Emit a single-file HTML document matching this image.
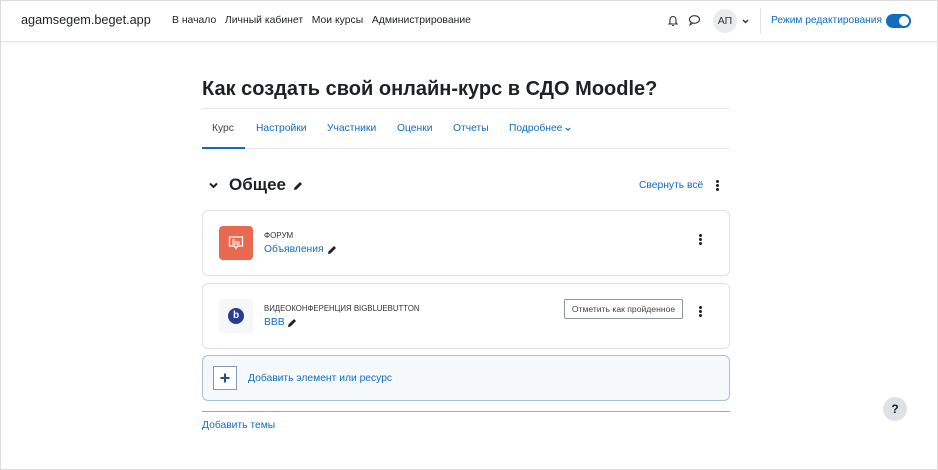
<!DOCTYPE html>
<html><head><meta charset="utf-8"><style>
*{box-sizing:border-box;margin:0;padding:0}
body{width:938px;height:470px;overflow:hidden;background:#fff;font-family:"Liberation Sans","Noto Sans CJK SC",sans-serif;color:#1d2125;position:relative}
.frame{position:absolute;inset:0;border:1px solid #dcdcdc;pointer-events:none}
.abs{position:absolute;white-space:nowrap}
.nav{position:absolute;left:0;top:0;width:938px;height:42px;border-bottom:1px solid #e3e3e3;box-shadow:0 1px 2px rgba(0,0,0,.05)}
.card{position:absolute;left:202px;width:528px;border:1px solid #dee2e6;border-radius:6px;background:#fff}
.kebab{position:absolute;width:3px}
.kebab i{display:block;width:3px;height:3px;background:#1d2125;border-radius:50%;margin-bottom:1px}
</style></head><body>
<div class="nav"></div>
<div class="abs" style="left:21px;top:13px;font-size:12.7px;color:#1d2125">agamsegem.beget.app</div>
<div class="abs" style="left:172px;top:15px;font-size:10.4px;color:#1d2125">В начало&nbsp;&nbsp;&nbsp;Личный кабинет&nbsp;&nbsp;&nbsp;Мои курсы&nbsp;&nbsp;&nbsp;Администрирование</div>
<svg class="abs" style="left:667px;top:14px" width="12" height="13" viewBox="0 0 12 13"><path d="M3 9V5.5a3 3 0 0 1 6 0V9l1 1H2z M5 11.5h2" fill="none" stroke="#333" stroke-width="1.1"/></svg>
<svg class="abs" style="left:688px;top:14px" width="13" height="12" viewBox="0 0 13 12"><ellipse cx="6.5" cy="5.5" rx="5" ry="3.8" fill="none" stroke="#333" stroke-width="1.1"/><path d="M3 8.5 2 11l3-2" fill="none" stroke="#333" stroke-width="1"/></svg>
<div class="abs" style="left:713px;top:9px;width:24px;height:24px;border-radius:50%;background:#e9ecef;font-size:10.5px;line-height:24px;text-align:center;color:#333">АП</div>
<svg class="abs" style="left:742px;top:19px" width="7" height="5" viewBox="0 0 7 5"><path d="M1 1l2.5 2.5L6 1" fill="none" stroke="#333" stroke-width="1.4"/></svg>
<div class="abs" style="left:760px;top:8px;width:1px;height:26px;background:#e3e3e3"></div>
<div class="abs" style="left:771px;top:15px;font-size:10.2px;color:#0f6cbf">Режим редактирования</div>
<div class="abs" style="left:886px;top:14px;width:25px;height:14px;border-radius:7px;background:#0f6cbf"><div style="position:absolute;right:2px;top:2px;width:10px;height:10px;border-radius:50%;background:#fff"></div></div>

<div class="abs" style="left:202px;top:78px;font-size:20px;font-weight:bold">Как создать свой онлайн-курс в СДО Moodle?</div>
<div class="abs" style="left:202px;top:108px;width:528px;height:1px;background:#e6e6e6"></div>
<div class="abs" style="left:212px;top:123px;font-size:10.3px;color:#444">Курс</div>
<div class="abs" style="left:256px;top:123px;font-size:10.3px;color:#0f6cbf">Настройки</div>
<div class="abs" style="left:327px;top:123px;font-size:10.3px;color:#0f6cbf">Участники</div>
<div class="abs" style="left:397px;top:123px;font-size:10.3px;color:#0f6cbf">Оценки</div>
<div class="abs" style="left:453px;top:123px;font-size:10.3px;color:#0f6cbf">Отчеты</div>
<div class="abs" style="left:509px;top:123px;font-size:10.3px;color:#0f6cbf">Подробнее</div>
<svg class="abs" style="left:565px;top:127px" width="6" height="5" viewBox="0 0 6 5"><path d="M.8 1l2.2 2.2L5.2 1" fill="none" stroke="#0f6cbf" stroke-width="1.2"/></svg>
<div class="abs" style="left:202px;top:148px;width:528px;height:1px;background:#e6e6e6"></div>
<div class="abs" style="left:202px;top:147px;width:43px;height:2px;background:#0f6cbf"></div>

<svg class="abs" style="left:209px;top:182px" width="9" height="7" viewBox="0 0 9 7"><path d="M1 1.5l3.5 3.5L8 1.5" fill="none" stroke="#1d2125" stroke-width="2"/></svg>
<div class="abs" style="left:229px;top:175px;font-size:17px;font-weight:bold">Общее</div>
<svg class="abs" style="left:293px;top:181px" width="10" height="10" viewBox="0 0 10 10"><path d="M1 9l.5-2.5L7 1l2 2-5.5 5.5z" fill="#1d2125"/></svg>
<div class="abs" style="left:639px;top:180px;font-size:10.3px;color:#0f6cbf">Свернуть всё</div>
<div class="kebab" style="left:716px;top:180px"><i></i><i></i><i></i></div>

<div class="card" style="top:210px;height:66px"></div>
<div class="abs" style="left:219px;top:226px;width:34px;height:34px;border-radius:4px;background:#e8694f"></div>
<svg class="abs" style="left:227px;top:234px" width="18" height="18" viewBox="0 0 18 18"><path d="M2.5 3h13v9h-5l-1.5 2.5L7.5 12h-5z" fill="none" stroke="#fff" stroke-width="1.3"/><path d="M5 6h3M5 8h8M5 10h8" stroke="#fff" stroke-width="1"/></svg>
<div class="abs" style="left:264px;top:231px;font-size:8px;color:#333">ФОРУМ</div>
<div class="abs" style="left:264px;top:244px;font-size:10.3px;color:#0f6cbf">Объявления</div>
<svg class="abs" style="left:327px;top:245px" width="10" height="10" viewBox="0 0 10 10"><path d="M1 9l.5-2.5L7 1l2 2-5.5 5.5z" fill="#1d2125"/></svg>
<div class="kebab" style="left:699px;top:234px"><i></i><i></i><i></i></div>

<div class="card" style="top:283px;height:66px"></div>
<div class="abs" style="left:219px;top:299px;width:34px;height:34px;border-radius:4px;background:#f5f7f9"></div>
<div class="abs" style="left:228px;top:308px;width:16px;height:16px;border-radius:50%;background:#283c90;color:#fff;font-size:10px;font-weight:bold;line-height:15px;text-align:center">b</div>
<div class="abs" style="left:264px;top:304px;font-size:7.8px;color:#333">ВИДЕОКОНФЕРЕНЦИЯ BIGBLUEBUTTON</div>
<div class="abs" style="left:264px;top:317px;font-size:10.3px;color:#0f6cbf">BBB</div>
<svg class="abs" style="left:287px;top:318px" width="10" height="10" viewBox="0 0 10 10"><path d="M1 9l.5-2.5L7 1l2 2-5.5 5.5z" fill="#1d2125"/></svg>
<div class="abs" style="left:564px;top:299px;width:119px;height:20px;border:1px solid #8f959e;border-radius:2px;font-size:8.6px;line-height:18px;text-align:center;color:#444">Отметить как пройденное</div>
<div class="kebab" style="left:699px;top:306px"><i></i><i></i><i></i></div>

<div class="abs" style="left:202px;top:355px;width:528px;height:46px;border:1px solid #a9c0d6;border-radius:6px;background:#f5f9fc"></div>
<div class="abs" style="left:213px;top:366px;width:24px;height:24px;border:1px solid #7f9ab8;background:#fff"></div>
<svg class="abs" style="left:219px;top:372px" width="12" height="12" viewBox="0 0 12 12"><path d="M6 1.5v9M1.5 6h9" stroke="#1f4f8a" stroke-width="2"/></svg>
<div class="abs" style="left:248px;top:373px;font-size:10.3px;color:#0f6cbf">Добавить элемент или ресурс</div>
<div class="abs" style="left:202px;top:411px;width:528px;height:1px;background:#8fa9bb"></div>
<div class="abs" style="left:202px;top:420px;font-size:10.3px;color:#0f6cbf">Добавить темы</div>

<div class="abs" style="left:883px;top:397px;width:24px;height:24px;border-radius:50%;background:#dee2e6;font-size:12px;font-weight:bold;line-height:24px;text-align:center;color:#1d2125">?</div>
<div class="frame"></div>
</body></html>
